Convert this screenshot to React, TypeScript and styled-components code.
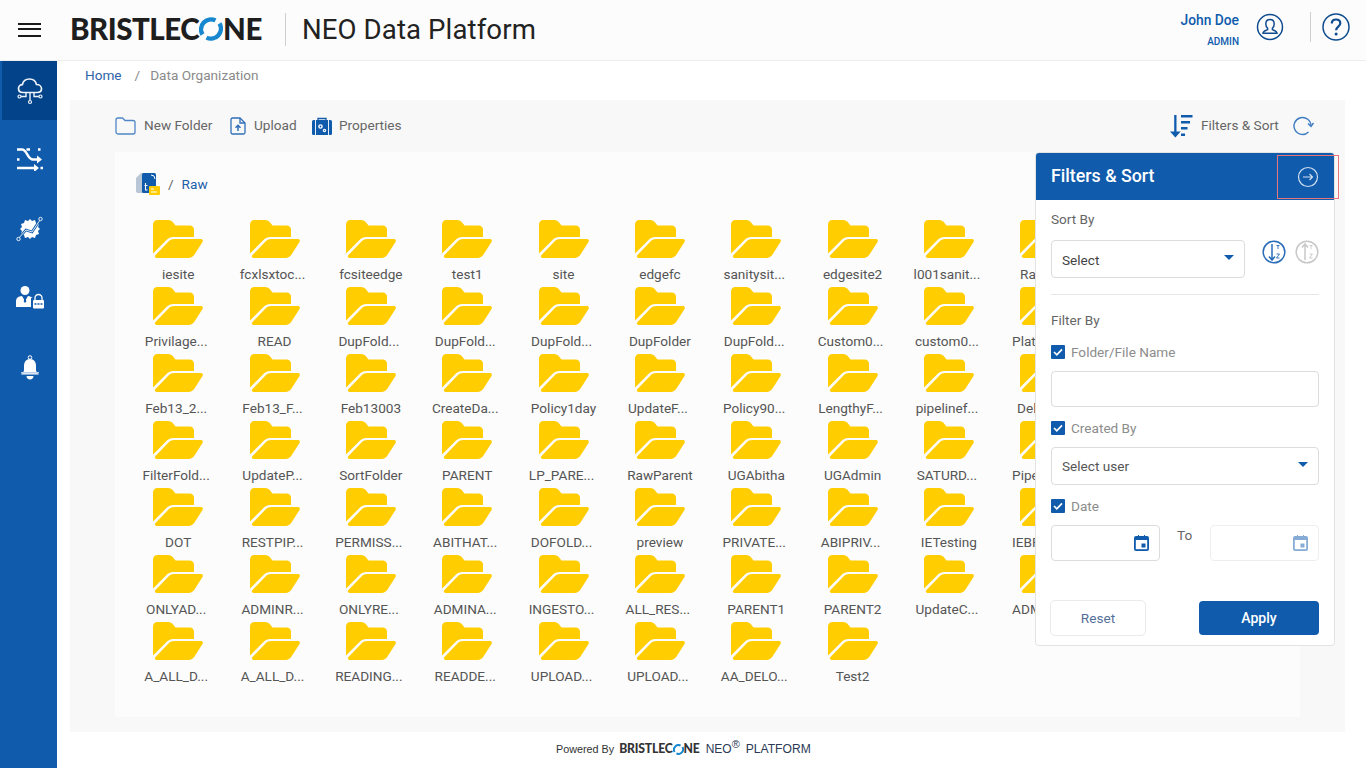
import React from 'react';
import styled, { createGlobalStyle } from 'styled-components';

const BLUE = '#105bac';
const BORDER = '#dcdcdc';

const GlobalStyle = createGlobalStyle`
  html, body {
    margin: 0;
    padding: 0;
    background: #fff;
    font-family: Roboto, "Liberation Sans", sans-serif;
  }
`;

const Page = styled.div`
  position: relative;
  width: 1366px;
  height: 768px;
  overflow: hidden;
  background: #fff;
`;

const Header = styled.header`
  position: absolute;
  left: 0;
  top: 0;
  width: 1366px;
  height: 60px;
  background: #fcfcfc;
  border-bottom: 1px solid #eeeeee;
`;

const Burger = styled.div`
  position: absolute;
  left: 18px;
  top: 23px;
  width: 23px;
  height: 14px;
  border-top: 2px solid #1a1a1a;
  border-bottom: 2px solid #1a1a1a;
  box-sizing: border-box;
  &::after {
    content: '';
    display: block;
    margin-top: 3px;
    height: 2px;
    background: #1a1a1a;
  }
`;

const LogoWrap = styled.div<{ $small?: boolean }>`
  position: ${p => (p.$small ? 'static' : 'absolute')};
  left: 70px;
  top: 12px;
  display: inline-flex;
  align-items: center;
  height: ${p => (p.$small ? '14px' : '34px')};
  color: ${p => (p.$small ? '#333' : '#1e1e1e')};
  font-family: Lato, "Open Sans", sans-serif;
  font-weight: 900;
  font-size: ${p => (p.$small ? '12.2px' : '29.5px')};
  letter-spacing: ${p => (p.$small ? '-0.2px' : '-0.5px')};
  line-height: 1;
`;

const HeaderRule = styled.div`
  position: absolute;
  left: 285px;
  top: 13px;
  width: 1px;
  height: 33px;
  background: #cfcfcf;
`;

const Title = styled.div`
  position: absolute;
  left: 302px;
  top: 13px;
  font-size: 27.6px;
  line-height: 34px;
  color: #222;
  letter-spacing: 0.1px;
`;

const UserName = styled.div`
  position: absolute;
  right: 127px;
  top: 12px;
  font-size: 13.8px;
  line-height: 17px;
  font-weight: 500;
  color: ${BLUE};
`;

const UserRole = styled.div`
  position: absolute;
  right: 127px;
  top: 35px;
  font-size: 10px;
  line-height: 13px;
  font-weight: 500;
  color: ${BLUE};
`;

const HeaderIcon = styled.svg<{ $x: number; $y: number }>`
  position: absolute;
  left: ${p => p.$x}px;
  top: ${p => p.$y}px;
`;

const HeaderRuleRight = styled.div`
  position: absolute;
  left: 1310px;
  top: 12px;
  width: 1px;
  height: 30px;
  background: #cfcfcf;
`;

const Sidebar = styled.nav`
  position: absolute;
  left: 0;
  top: 61px;
  width: 57px;
  height: 707px;
  background: ${BLUE};
`;

const NavItem = styled.div<{ $active?: boolean }>`
  position: absolute;
  left: 2px;
  top: ${p => (p.$active ? '0' : 'auto')};
  width: 55px;
  height: 59px;
  display: flex;
  align-items: center;
  justify-content: center;
  background: ${p => (p.$active ? '#03438a' : 'transparent')};
`;

const NavSlot = styled(NavItem)<{ $top: number }>`
  top: ${p => p.$top}px;
`;

const Crumbs = styled.div`
  position: absolute;
  left: 85px;
  top: 66px;
  font-size: 13.6px;
  line-height: 18px;
  color: #8a8a8a;
  display: flex;
`;

const CrumbLink = styled.span`
  color: #2e62a8;
`;

const CrumbSep = styled.span`
  margin: 0 10px 0 13px;
`;

const Card = styled.section`
  position: absolute;
  left: 70px;
  top: 100px;
  width: 1275px;
  height: 632px;
  background: #f8f8f8;
`;

const ToolButton = styled.div<{ $x: number; $y?: number }>`
  position: absolute;
  left: ${p => p.$x}px;
  top: ${p => p.$y ?? 14}px;
  height: 24px;
  display: flex;
  align-items: center;
  font-size: 13.6px;
  color: #666;
  white-space: nowrap;
`;

const ToolLabel = styled.span<{ $gap: number }>`
  margin-left: ${p => p.$gap}px;
  margin-top: -2px;
`;

const Browser = styled.div`
  position: absolute;
  left: 45px;
  top: 52px;
  width: 1185px;
  height: 565px;
  background: #fcfcfc;
  overflow: hidden;
`;

const Path = styled.div`
  position: absolute;
  left: 21px;
  top: 19px;
  height: 26px;
  display: flex;
  align-items: center;
  font-size: 13.6px;
  color: #666;
`;

const PathSep = styled.span`
  margin: 0 8px 0 8px;
`;

const PathLink = styled.span`
  color: #1d5fa8;
`;

const FolderGrid = styled.div`
  position: absolute;
  left: 15px;
  top: 68px;
  display: grid;
  grid-template-columns: repeat(10, 96.35px);
  grid-auto-rows: 67px;
`;

const FolderItem = styled.div`
  display: flex;
  flex-direction: column;
  align-items: center;
`;

const FolderName = styled.div<{ $dots?: boolean }>`
  margin-top: 7px;
  box-sizing: border-box;
  width: 96px;
  padding-right: ${p => (p.$dots ? '4px' : '0')};
  text-align: center;
  font-size: 13.6px;
  line-height: 18px;
  color: #555;
  white-space: nowrap;
`;

// last column runs under the filter panel, so the label stops at the panel edge
const ClippedName = styled(FolderName)<{ $indent: number }>`
  align-self: flex-start;
  width: 39px;
  padding-left: ${p => p.$indent}px;
  overflow: hidden;
  text-align: left;
`;

const Panel = styled.aside`
  position: absolute;
  left: 1035px;
  top: 152px;
  width: 300px;
  height: 494px;
  box-sizing: border-box;
  background: #fff;
  border: 1px solid #e3e3e3;
  border-radius: 4px;
  overflow: hidden;
`;

const PanelHead = styled.div`
  position: absolute;
  left: 0;
  top: 0;
  width: 100%;
  height: 47px;
  background: ${BLUE};
  color: #fff;
  font-size: 17.8px;
  font-weight: 500;
  line-height: 45px;
  padding-left: 15px;
  box-sizing: border-box;
`;

const CloseOutline = styled.div`
  position: absolute;
  left: 1277px;
  top: 155px;
  width: 62px;
  height: 44px;
  box-sizing: border-box;
  border: 1px solid #e8747c;
  display: flex;
  align-items: center;
  justify-content: center;
  padding-right: 1px;
`;

const FieldLabel = styled.div<{ $y: number }>`
  position: absolute;
  left: 15px;
  top: ${p => p.$y}px;
  font-size: 13.6px;
  line-height: 18px;
  color: #666;
`;

const Field = styled.div<{ $x: number; $y: number; $w: number; $h: number; $faded?: boolean }>`
  position: absolute;
  left: ${p => p.$x}px;
  top: ${p => p.$y}px;
  width: ${p => p.$w}px;
  height: ${p => p.$h}px;
  box-sizing: border-box;
  border: 1px solid ${p => (p.$faded ? '#eeeeee' : BORDER)};
  border-radius: 4px;
  background: #fff;
  display: flex;
  align-items: center;
  padding: 0 10px;
  justify-content: space-between;
  font-size: 13.6px;
  color: #555;
`;

const SortValue = styled.span`
  margin-top: 2px;
  color: #444;
`;

const Caret = styled.span`
  width: 0;
  height: 0;
  margin-top: -3px;
  border-left: 5px solid transparent;
  border-right: 5px solid transparent;
  border-top: 5px solid ${BLUE};
`;

const PanelRule = styled.div`
  position: absolute;
  left: 15px;
  top: 141px;
  width: 268px;
  height: 1px;
  background: #e6e6e6;
`;

const CheckRow = styled.div<{ $y: number }>`
  position: absolute;
  left: 15px;
  top: ${p => p.$y}px;
  display: flex;
  align-items: center;
  font-size: 13.6px;
  line-height: 18px;
  color: #8c8c8c;
`;

const CheckBox = styled.span`
  width: 14px;
  height: 14px;
  margin-right: 6px;
  border-radius: 1px;
  background: ${BLUE};
  display: flex;
  align-items: center;
  justify-content: center;
`;

const ToLabel = styled.div`
  position: absolute;
  left: 141px;
  top: 373px;
  font-size: 13.6px;
  line-height: 18px;
  color: #666;
`;

const ResetButton = styled.div`
  position: absolute;
  left: 14px;
  top: 447px;
  width: 96px;
  height: 36px;
  box-sizing: border-box;
  border: 1px solid #eaeaea;
  border-radius: 5px;
  background: #fff;
  display: flex;
  align-items: center;
  justify-content: center;
  font-size: 13.6px;
  color: #55709a;
`;

const ApplyButton = styled.div`
  position: absolute;
  left: 163px;
  top: 448px;
  width: 120px;
  height: 34px;
  border-radius: 4px;
  background: ${BLUE};
  display: flex;
  align-items: center;
  justify-content: center;
  font-size: 14px;
  font-weight: 500;
  color: #fff;
`;

const SortBadge = styled.svg<{ $x: number }>`
  position: absolute;
  left: ${p => p.$x}px;
  top: 87px;
`;

const Footer = styled.footer`
  position: absolute;
  left: 556px;
  top: 740px;
  height: 18px;
  display: flex;
  align-items: center;
  font-family: "Liberation Sans", Arial, sans-serif;
  white-space: nowrap;
`;

const PoweredBy = styled.span`
  font-size: 10.8px;
  color: #333;
  margin-right: 5px;
`;

const FooterNeo = styled.span`
  margin-left: 6px;
  font-size: 12px;
  color: #2b3a55;
`;

const FooterMark = styled.sup`
  font-size: 11px;
  line-height: 0;
`;

const FooterWord = styled.span`
  margin-left: 6px;
  font-size: 12.1px;
  color: #2b3a55;
`;

const folders = [
  ['iesite', 'fcxlsxtoc...', 'fcsiteedge', 'test1', 'site', 'edgefc', 'sanitysit...', 'edgesite2', 'l001sanit...', { name: 'Raw...', indent: 23 }],
  ['Privilage...', 'READ', 'DupFold...', 'DupFold...', 'DupFold...', 'DupFolder', 'DupFold...', 'Custom0...', 'custom0...', { name: 'Platform', indent: 15 }],
  ['Feb13_2...', 'Feb13_F...', 'Feb13003', 'CreateDa...', 'Policy1day', 'UpdateF...', 'Policy90...', 'LengthyF...', 'pipelinef...', { name: 'Delete', indent: 20 }],
  ['FilterFold...', 'UpdateP...', 'SortFolder', 'PARENT', 'LP_PARE...', 'RawParent', 'UGAbitha', 'UGAdmin', 'SATURD...', { name: 'Pipeline', indent: 15 }],
  ['DOT', 'RESTPIP...', 'PERMISS...', 'ABITHAT...', 'DOFOLD...', 'preview', 'PRIVATE...', 'ABIPRIV...', 'IETesting', { name: 'IEBRTest', indent: 15 }],
  ['ONLYAD...', 'ADMINR...', 'ONLYRE...', 'ADMINA...', 'INGESTO...', 'ALL_RES...', 'PARENT1', 'PARENT2', 'UpdateC...', { name: 'ADMINU', indent: 15 }],
  ['A_ALL_D...', 'A_ALL_D...', 'READING...', 'READDE...', 'UPLOAD...', 'UPLOAD...', 'AA_DELO...', 'Test2'],
].flat();

const FolderIcon = () => (
  <svg width="50" height="38" viewBox="0 0 50 38">
    <path
      fill="#ffcd00"
      d="M0 4.500C0 1.800 1.800 0 4.500 0H15c2.500 0 3.800 1 5.300 2.800L22.500 5.500H36.500C39.300 5.500 41 7.200 41 9.500V17H20.500C17.200 17 15 18.200 13 20.500L0 33.500z"
    />
    <path
      fill="#ffcd00"
      d="M21.500 19H47.500C49.500 19 50.500 20.300 49.500 22L41.500 34.500C40 36.800 38 38 35.500 38H4.500C2 38 1 36.800 2.500 35L15.500 21.500C17.300 19.700 19 19 21.500 19z"
    />
  </svg>
);

const LogoO = ({ size }: { size: number }) => (
  <svg width={size} height={size} viewBox="0 0 24 24">
    <path d="M16.500 3.400A10 10 0 0 0 3.500 17.500" fill="none" stroke="#1787cf" strokeWidth="4.400" />
    <path d="M7.500 20.600A10 10 0 0 0 20.500 6.500" fill="none" stroke="#1787cf" strokeWidth="4.400" />
  </svg>
);

const Logo = ({ small }: { small?: boolean }) => (
  <LogoWrap $small={small}>
    BRISTLEC
    <LogoO size={small ? 11 : 24} />
    NE
  </LogoWrap>
);

const CloudIcon = () => (
  <svg width="28" height="28" viewBox="0 0 28 28" fill="none" stroke="#eef3f9" strokeWidth="1.700">
    <path d="M7 15.500c-3 0-4.500-2-4.500-4 0-2.200 1.700-3.800 3.800-3.800C7 4.500 9.800 2 13.500 2c3.800 0 6.300 2.500 7 5.500 3 0 5 2 5 4.200 0 2.200-1.800 3.800-4.500 3.800z" />
    <path d="M10 15.500v4H5M14 15.500v8M18 15.500v4h5" strokeWidth="1.400" />
    <circle cx="3.500" cy="19.500" r="1.500" strokeWidth="1.200" />
    <circle cx="14" cy="25" r="1.500" strokeWidth="1.200" />
    <circle cx="24.500" cy="19.500" r="1.500" strokeWidth="1.200" />
  </svg>
);

const FlowIcon = () => (
  <svg width="26" height="24" viewBox="0 0 26 24" fill="none" stroke="#fff" strokeWidth="2.400">
    <path d="M0 2.500h5c5 0 5.500 10 11 10h5" />
    <path d="M0 21h18M0 12.500h2.500" />
    <path d="M20 8.500l5 4-5 4zM17 17l5 4-5 4z" fill="#fff" stroke="none" />
    <path d="M9.500 2.500h3.500M21 2.500h2.500M23.500 21H26" />
  </svg>
);

const GearIcon = () => (
  <svg width="28" height="26" viewBox="0 0 28 26" fill="none">
    <path
      fill="#fff"
      d="M9 4l3 1 2-2 2 2 3-1 1 3 3 1-1 3 2 2-2 2 1 3-3 1-1 3-3-1-2 2-2-2-3 1-1-3-3-1 1-3-2-2 2-2-1-3 3-1z"
    />
    <path d="M2 23l8-9 6 2 8-12" stroke={BLUE} strokeWidth="2.600" />
    <path d="M2 23l8-9 6 2 8-12" stroke="#fff" strokeWidth="0.900" />
    <circle cx="24.500" cy="3" r="1.700" fill={BLUE} stroke="#fff" strokeWidth="0.900" />
    <circle cx="2.500" cy="23" r="1.700" fill={BLUE} stroke="#fff" strokeWidth="0.900" />
  </svg>
);

const UserLockIcon = () => (
  <svg width="28" height="24" viewBox="0 0 28 24">
    <circle cx="9" cy="4.500" r="4.500" fill="#fff" />
    <path fill="#fff" d="M0 21v-6c0-3 2-4.500 6-5l3 5 3-5c2 .3 3.500.8 4.500 2H15v9z" />
    <path fill={BLUE} d="M8.300 10.500h1.400l.5 5-1.200 1.500-1.200-1.500z" />
    <rect x="17" y="14" width="11" height="8.500" rx="1" fill="#fff" />
    <path d="M19 14v-2a3.500 3.500 0 0 1 7 0v2" fill="none" stroke="#fff" strokeWidth="1.300" />
    <path d="M18.500 18h8" stroke={BLUE} strokeWidth="1.500" strokeDasharray="2 1" />
  </svg>
);

const BellIcon = () => (
  <svg width="20" height="26" viewBox="0 0 20 26">
    <circle cx="10" cy="2.500" r="1.800" fill="none" stroke="#fff" strokeWidth="1" />
    <path fill="#fff" d="M10 4c4 0 6 3 6 7v4c0 1.500 1.500 3 3 4.500H1C2.500 18 4 16.500 4 15v-4c0-4 2-7 6-7z" />
    <rect x="1" y="17" width="18" height="1.500" fill="#b9cde6" />
    <path fill="#fff" d="M6.500 21h7c0 2-1.500 3.500-3.500 3.500S6.500 23 6.500 21z" />
  </svg>
);

const NewFolderIcon = () => (
  <svg width="21" height="18" viewBox="0 0 21 18" fill="none" stroke="#4f86c6" strokeWidth="1.300">
    <path d="M1 3a2 2 0 0 1 2-2h4.500l2.500 2.500h8a2 2 0 0 1 2 2V15a2 2 0 0 1-2 2H3a2 2 0 0 1-2-2z" />
  </svg>
);

const UploadIcon = () => (
  <svg width="16" height="18" viewBox="0 0 16 18" fill="none" stroke="#2f6fb7" strokeWidth="1.300">
    <path d="M1 2.500A1.500 1.500 0 0 1 2.500 1H10l5 5v9.500a1.500 1.500 0 0 1-1.500 1.500h-11A1.500 1.500 0 0 1 1 15.500z" />
    <path d="M10 1v5h5" />
    <path d="M8 14V8.500M5.500 10.800L8 8.300l2.500 2.500" strokeWidth="1.500" />
  </svg>
);

const PropertiesIcon = () => (
  <svg width="20" height="18" viewBox="0 0 20 18">
    <path fill="none" stroke={BLUE} strokeWidth="1.300" d="M6 3V1.500h8V3" />
    <rect x="0" y="3" width="20" height="15" rx="1.500" fill={BLUE} />
    <path d="M3.500 3v15M16.500 3v15" stroke="#fff" strokeWidth="0.900" />
    <circle cx="8.500" cy="9.500" r="2.300" fill="#fff" />
    <circle cx="8.500" cy="9.500" r="0.900" fill={BLUE} />
    <circle cx="12.500" cy="13.500" r="1.700" fill="#fff" />
    <circle cx="12.500" cy="13.500" r="0.600" fill={BLUE} />
  </svg>
);

const SortIcon = () => (
  <svg width="23" height="24" viewBox="0 0 23 24" fill={BLUE}>
    <path d="M4.200 1h2.300v18H4.200z" />
    <path d="M0 17.500h10.700L5.350 23.500z" />
    <path d="M11 1h11.500v2.600H11zM11 7h9v2.600h-9zM11 13h6.500v2.600H11zM11 19.500h4v2.600h-4z" />
  </svg>
);

const RefreshIcon = () => (
  <svg width="22" height="20" viewBox="0 0 22 20" fill="none" stroke="#3f7cc2" strokeWidth="1.400">
    <path d="M18 10A8.500 8.500 0 1 0 15.500 16" />
    <path d="M15 7.500l3 3 2.500-3.500" />
  </svg>
);

const PathIcon = () => (
  <svg width="24" height="24" viewBox="0 0 24 24">
    <path fill="#b9c6d6" d="M0 6l5-5h6v20H2a2 2 0 0 1-2-2z" />
    <rect x="6" y="1" width="14" height="20" rx="1.500" fill={BLUE} />
    <path d="M9.500 11v7h2M8.500 13.500h3" stroke="#fff" strokeWidth="1.100" fill="none" />
    <path d="M15 3a4 4 0 0 1 4 4" stroke="#fff" strokeWidth="1" fill="none" />
    <rect x="13" y="14" width="11" height="9" rx="1" fill="#ffcd00" />
    <path d="M15 17h3M15 20h6" stroke="#fff" strokeWidth="1" />
  </svg>
);

const ArrowCircle = () => (
  <svg width="22" height="22" viewBox="0 0 22 22" fill="none" stroke="#cfdff0" strokeWidth="1.200">
    <circle cx="11" cy="11" r="9.500" />
    <path d="M6 11h9.500M12.500 8l3 3-3 3" />
  </svg>
);

const SortBadgeIcon = ({ x, color, up }: { x: number; color: string; up?: boolean }) => (
  <SortBadge $x={x} width="24" height="24" viewBox="0 0 24 24" fill="none" stroke={color} strokeWidth="1.500">
    <circle cx="12" cy="12" r="10.800" />
    <path d={up ? 'M10 20V4M7 7.500L10 4l3 3.500' : 'M10 4v16M7 16.500l3 3.500 3-3.500'} />
    <path d="M14.500 5.500h3M16 5.500v3.500M14.500 14h3l-3 4h3" strokeWidth="0.900" />
  </SortBadge>
);

const CalendarIcon = ({ faded }: { faded?: boolean }) => (
  <svg width="15" height="16" viewBox="0 0 15 16" opacity={faded ? 0.5 : 1}>
    <path fill={BLUE} d="M2 1h2V0h1v1h5V0h1v1h2a2 2 0 0 1 2 2v11a2 2 0 0 1-2 2H2a2 2 0 0 1-2-2V3a2 2 0 0 1 2-2z" />
    <rect x="1.800" y="5" width="11.400" height="9.200" fill="#fff" />
    <rect x="7.500" y="8.500" width="4" height="4" fill={BLUE} />
  </svg>
);

const Check = () => (
  <CheckBox>
    <svg width="10" height="8" viewBox="0 0 10 8" fill="none" stroke="#fff" strokeWidth="1.700">
      <path d="M1 4l2.800 2.800L9 1.300" />
    </svg>
  </CheckBox>
);

export default function App() {
  return (
    <Page>
      <GlobalStyle />
      <Header>
        <Burger />
        <Logo />
        <HeaderRule />
        <Title>NEO Data Platform</Title>
        <UserName>John Doe</UserName>
        <UserRole>ADMIN</UserRole>
        <HeaderIcon $x={1256} $y={13} width="28" height="28" viewBox="0 0 28 28" fill="none" stroke="#0f4c8f" strokeWidth="1.500">
          <circle cx="14" cy="14" r="12.500" />
          <path d="M14 6.500c-2.700 0-4.200 2-4.200 4.500 0 1.700.7 3.200 1.800 4.200v1.500c-1.500.8-4.600 1.200-4.600 3.600h14c0-2.400-3.100-2.800-4.600-3.600v-1.500c1.100-1 1.800-2.500 1.800-4.200 0-2.500-1.500-4.500-4.200-4.500z" />
        </HeaderIcon>
        <HeaderRuleRight />
        <HeaderIcon $x={1322} $y={13} width="28" height="28" viewBox="0 0 28 28" fill="none" stroke="#0f4c8f" strokeWidth="1.500">
          <circle cx="14" cy="14" r="13" />
          <path d="M9.800 10.500c0-2.500 1.900-4 4.300-4s4.200 1.500 4.200 3.800c0 3.300-4.200 3.500-4.200 7" strokeWidth="2.200" />
          <circle cx="14.100" cy="21" r="1.500" fill="#0f4c8f" stroke="none" />
        </HeaderIcon>
      </Header>

      <Sidebar>
        <NavItem $active>
          <CloudIcon />
        </NavItem>
        <NavSlot $top={68}>
          <FlowIcon />
        </NavSlot>
        <NavSlot $top={138}>
          <GearIcon />
        </NavSlot>
        <NavSlot $top={207}>
          <UserLockIcon />
        </NavSlot>
        <NavSlot $top={277}>
          <BellIcon />
        </NavSlot>
      </Sidebar>

      <Crumbs>
        <CrumbLink>Home</CrumbLink>
        <CrumbSep>/</CrumbSep>
        Data Organization
      </Crumbs>

      <Card>
        <ToolButton $x={45}>
          <NewFolderIcon />
          <ToolLabel $gap={8}>New Folder</ToolLabel>
        </ToolButton>
        <ToolButton $x={160}>
          <UploadIcon />
          <ToolLabel $gap={8}>Upload</ToolLabel>
        </ToolButton>
        <ToolButton $x={242}>
          <PropertiesIcon />
          <ToolLabel $gap={7}>Properties</ToolLabel>
        </ToolButton>
        <ToolButton $x={1100}>
          <SortIcon />
          <ToolLabel $gap={8}>Filters &amp; Sort</ToolLabel>
        </ToolButton>
        <ToolButton $x={1223}>
          <RefreshIcon />
        </ToolButton>

        <Browser>
          <Path>
            <PathIcon />
            <PathSep>/</PathSep>
            <PathLink>Raw</PathLink>
          </Path>
          <FolderGrid>
            {folders.map((item, i) => (
              <FolderItem key={i}>
                <FolderIcon />
                {typeof item === 'string' ? (
                  <FolderName $dots={item.endsWith('...')}>{item}</FolderName>
                ) : (
                  <ClippedName $indent={item.indent}>{item.name}</ClippedName>
                )}
              </FolderItem>
            ))}
          </FolderGrid>
        </Browser>
      </Card>

      <Panel>
        <PanelHead>Filters &amp; Sort</PanelHead>
        <FieldLabel $y={57}>Sort By</FieldLabel>
        <Field $x={15} $y={87} $w={194} $h={38}>
          <SortValue>Select</SortValue>
          <Caret />
        </Field>
        <SortBadgeIcon x={226} color="#2a6cb8" />
        <SortBadgeIcon x={259} color="#c8c8c8" up />
        <PanelRule />
        <FieldLabel $y={158}>Filter By</FieldLabel>
        <CheckRow $y={190}>
          <Check />
          Folder/File Name
        </CheckRow>
        <Field $x={15} $y={218} $w={268} $h={36} />
        <CheckRow $y={266}>
          <Check />
          Created By
        </CheckRow>
        <Field $x={15} $y={294} $w={268} $h={38}>
          Select user
          <Caret />
        </Field>
        <CheckRow $y={344}>
          <Check />
          Date
        </CheckRow>
        <Field $x={15} $y={372} $w={109} $h={36}>
          <span />
          <CalendarIcon />
        </Field>
        <ToLabel>To</ToLabel>
        <Field $x={174} $y={372} $w={109} $h={36} $faded>
          <span />
          <CalendarIcon faded />
        </Field>
        <ResetButton>Reset</ResetButton>
        <ApplyButton>Apply</ApplyButton>
      </Panel>
      <CloseOutline>
        <ArrowCircle />
      </CloseOutline>

      <Footer>
        <PoweredBy>Powered By</PoweredBy>
        <Logo small />
        <FooterNeo>
          NEO<FooterMark>®</FooterMark>
        </FooterNeo>
        <FooterWord>PLATFORM</FooterWord>
      </Footer>
    </Page>
  );
}
